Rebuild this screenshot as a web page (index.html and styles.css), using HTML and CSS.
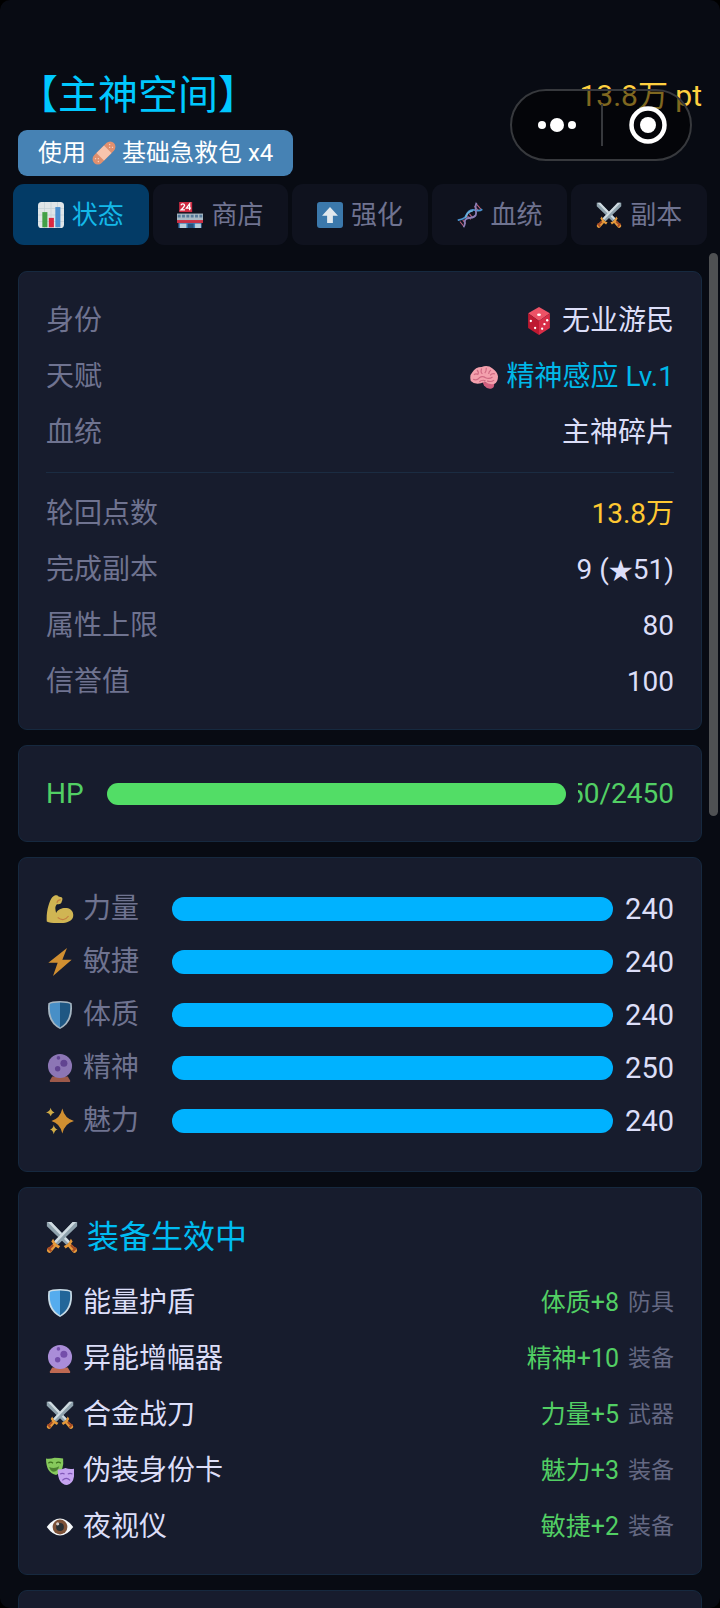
FILE: index.html
```html
<!DOCTYPE html>
<html lang="zh-CN">
<head>
<meta charset="utf-8">
<meta name="viewport" content="width=device-width, initial-scale=1">
<title>主神空间</title>
<link rel="stylesheet" href="styles.css">
</head>
<body>
<svg class="sprite" aria-hidden="true">
  <symbol id="bandage" viewBox="0 0 36 36">
    <g transform="rotate(-45 18 18)">
      <rect x="-3" y="10" width="42" height="16" rx="8" fill="#e0906f"/>
      <rect x="10" y="10" width="16" height="16" fill="#f7c4ad"/>
      <g fill="#f9d6c6"><circle cx="3" cy="15" r="1"/><circle cx="6" cy="18" r="1"/><circle cx="3" cy="21" r="1"/><circle cx="33" cy="15" r="1"/><circle cx="30" cy="18" r="1"/><circle cx="33" cy="21" r="1"/></g>
    </g>
  </symbol>
  <symbol id="chart" viewBox="0 0 36 36">
    <rect width="36" height="36" rx="5" fill="#dfe5e8"/>
    <path d="M0 9h36M0 18h36M0 27h36M9 0v36M18 0v36M27 0v36" stroke="#c3cfd5" stroke-width="1"/>
    <rect x="6" y="14" width="7" height="21" fill="#43a047"/>
    <rect x="15" y="22" width="7" height="13" fill="#dc2740"/>
    <rect x="24" y="7" width="7" height="28" fill="#4a90d0"/>
  </symbol>
  <symbol id="store" viewBox="0 0 36 36">
    <rect x="2" y="24" width="32" height="12" fill="#3f7fb5"/>
    <rect x="0" y="16" width="36" height="12" fill="#a9bac5"/>
    <path d="M1 19.500h34" stroke="#56799a" stroke-width="4" stroke-dasharray="4 2"/>
    <rect y="25" width="36" height="4" fill="#cb3044"/>
    <rect x="4" y="30" width="9" height="6" fill="#b9cedb"/><rect x="25" y="30" width="8" height="6" fill="#b9cedb"/>
    <rect x="15" y="30" width="8" height="6" fill="#27527c"/>
    <rect x="3" y="0" width="18" height="14" fill="#cf2b42"/>
    <path d="M5.500 4.500q.5-2 2.500-2t2.500 2q0 1.500-5 6.500h5.500M17.500 11.500v-9l-4.500 6h6.500" fill="none" stroke="#fff" stroke-width="1.800"/>
  </symbol>
  <symbol id="arrowup" viewBox="0 0 36 36">
    <rect width="36" height="36" rx="4" fill="#3b78ab"/>
    <path d="M18 7 29 19h-7v10h-8V19H7z" fill="#e1e8ed"/>
  </symbol>
  <symbol id="dna" viewBox="0 0 36 36">
    <path d="M4 27l5 6M8 25l4 5M14 19l5 5M17 16l4 5M24 6l6 6M27 3l6 7" stroke="#b8607f" stroke-width="1.500"/>
    <path d="M1 25c6-1 9-1 11-5 2-5 4-9 10-9 5 0 8 3 13-1" fill="none" stroke="#4a93cf" stroke-width="2.500"/>
    <path d="M9 35c4-5 0-8 3-11 4-4 11 0 14-6 2-6-3-9 1-17" fill="none" stroke="#8c7fb8" stroke-width="2.500"/>
    <path d="M12 22q2-9 10-10" fill="none" stroke="#6fb4dc" stroke-width="2"/>
  </symbol>
  <symbol id="swords" viewBox="0 0 36 36">
    <g id="blade">
      <path d="M1 1h5l21 22-4 4L1 6z" fill="#8fa2ad"/>
      <path d="M2 1h4l21 22-2 2z" fill="#d0dbe1"/>
      <path d="M20 28q5-1 8-8l2 3-2 3 6 5q2 2 0 4t-4 0l-5-6-3 2z" fill="#e59a3b"/>
      <path d="M28 27l5 5M30 34l4-4" stroke="#a74c25" stroke-width="2.500"/>
    </g>
    <use href="#blade" transform="matrix(-1 0 0 1 36 0)"/>
  </symbol>
  <symbol id="die" viewBox="0 0 36 36">
    <path d="M18 0 32 8 18 18 4 8z" fill="#ed5266"/>
    <path d="M4 8l14 10v18L4 27z" fill="#be1931"/>
    <path d="M32 8 18 18v18l14-9z" fill="#d82d47"/>
    <g fill="#fff"><ellipse cx="18" cy="10" rx="2.500" ry="1.700"/><circle cx="7.500" cy="18" r="1.500"/><circle cx="13" cy="27" r="1.500"/><circle cx="28.500" cy="17" r="1.500"/><circle cx="25" cy="22" r="1.500"/><circle cx="22" cy="28" r="1.500"/></g>
  </symbol>
  <symbol id="brain" viewBox="0 0 36 36">
    <path d="M18 29q4 5 9 4 5-1 4-7l-15-2z" fill="#d2607f"/>
    <path d="M1 23Q-1 16 3 12 7 5 15 5 23 2 29 7q6 4 7 10 0 8-5 10-7 1-12-3Q8 30 1 23z" fill="#f4a0ad"/>
    <path d="M5 15q3-2 5 0M9 9q3 3 1 6M15 7q-2 5 1 7M21 6q0 5-2 7M27 9q-3 2-3 5M32 14q-4-1-6 2M4 21q5 2 8-2 4-3 8 0 5 2 9-1M12 24q4-3 8-1M22 23q5 2 9-1" fill="none" stroke="#d06a83" stroke-width="1.500"/>
  </symbol>
  <symbol id="arm" viewBox="0 0 36 36">
    <path d="M1 34C0 22 4 8 8 3c3-4 8-3 8-1l4 1c2 1 1 4 0 6 0 3-5 3-6 3-3 3-2 7-1 11 4-8 21-9 22 2 1 10-12 12-21 11Q5 36 1 34z" fill="#ffdc5d"/>
    <path d="M15 29q8 6 14-2M14 10q1-4 5-4" fill="none" stroke="#ef9645" stroke-width="1.500"/>
  </symbol>
  <symbol id="bolt" viewBox="0 0 36 36">
    <path d="M27 0 3 19h12L9 36 33 15H21z" fill="#ffac33"/>
  </symbol>
  <symbol id="shield" viewBox="0 0 36 36">
    <path d="M18 0q11 0 15 3 3 24-15 33Q0 27 3 3 7 0 18 0z" fill="#c9dce7"/>
    <path d="M18 2Q9 2 5 4 3 25 18 34z" fill="#55acee"/>
    <path d="M18 2q9 0 13 2 2 21-13 30z" fill="#226699"/>
  </symbol>
  <symbol id="orb" viewBox="0 0 36 36">
    <path d="M8 29h20l3 5v2H5v-2z" fill="#bf6952"/>
    <circle cx="18" cy="15.500" r="15.500" fill="#aa8dd8"/>
    <g fill="#744eaa"><circle cx="23" cy="12" r="4.500"/><circle cx="15" cy="19" r="3.500"/><circle cx="16" cy="5" r="2.300"/></g>
  </symbol>
  <symbol id="sparkles" viewBox="0 0 36 36">
    <path d="M21 2q3 13 15 16-12 3-15 16Q18 21 7 18 18 15 21 2z" fill="#ffac33"/>
    <path d="M6 1q1 5 5 6-4 1-5 5-1-4-6-5 5-1 6-6zM10 23q1 5 5 6-4 1-5 6-1-5-5-6 4-1 5-6z" fill="#ffcf4d"/>
  </symbol>
  <symbol id="masks" viewBox="0 0 36 36">
    <path d="M0 2q5 1 11-1 6 0 11 1 2 17-9 21Q0 21 0 2z" fill="#86c95c"/>
    <path d="M3 8q3-3 6 0M13 8q3-3 6 0" fill="none" stroke="#3e721d" stroke-width="1.500"/>
    <path d="M4 13q7 3 13-1-2 7-7 7-4 0-6-6z" fill="#4b8130"/>
    <path d="M15 16q6 0 10-2 5 2 11 1 2 19-9 21Q15 35 15 16z" fill="#c5a3f0"/>
    <path d="M18 22q3-2 6 0M28 22q3-2 6 0M21 30q5-5 10 0" fill="none" stroke="#8058b8" stroke-width="1.500"/>
  </symbol>
  <symbol id="eye" viewBox="0 0 36 36">
    <path d="M1 18Q9 7 18 7t17 11q-8 11-17 11T1 18z" fill="#f5f8fa"/>
    <circle cx="18" cy="18" r="9.500" fill="#7d5238"/>
    <circle cx="18" cy="18" r="5" fill="#292f33"/>
    <circle cx="15" cy="14" r="2" fill="#d5cdc8"/>
  </symbol>
</svg>

<div class="app">
  <header class="header">
    <h1 class="title">【主神空间】</h1>
    <p class="points">13.8万 pt</p>
  </header>

  <div class="capsule">
    <button class="capsule-btn" type="button" aria-label="更多">
      <svg class="dots" viewBox="0 0 40 16"><circle cx="5" cy="8" r="4"/><circle cx="20" cy="8" r="7"/><circle cx="35" cy="8" r="4"/></svg>
    </button>
    <button class="capsule-btn capsule-close" type="button" aria-label="关闭">
      <svg class="ring" viewBox="0 0 38 38"><circle cx="19" cy="19" r="16.500" fill="none" stroke="#fff" stroke-width="4.500"/><circle cx="19" cy="19" r="8"/></svg>
    </button>
  </div>

  <div class="quick">
    <button class="quick-btn" type="button">使用<svg class="icon"><use href="#bandage"/></svg>基础急救包 x4</button>
  </div>

  <nav class="tabs">
    <button class="tab tab-active" type="button"><svg class="icon"><use href="#chart"/></svg>状态</button>
    <button class="tab" type="button"><svg class="icon"><use href="#store"/></svg>商店</button>
    <button class="tab" type="button"><svg class="icon"><use href="#arrowup"/></svg>强化</button>
    <button class="tab" type="button"><svg class="icon"><use href="#dna"/></svg>血统</button>
    <button class="tab" type="button"><svg class="icon"><use href="#swords"/></svg>副本</button>
  </nav>

  <main class="content">
    <section class="card">
      <dl class="rows">
        <div class="row"><dt>身份</dt><dd><svg class="icon"><use href="#die"/></svg>无业游民</dd></div>
        <div class="row"><dt>天赋</dt><dd class="cyan"><svg class="icon"><use href="#brain"/></svg>精神感应 Lv.1</dd></div>
        <div class="row"><dt>血统</dt><dd>主神碎片</dd></div>
      </dl>
      <hr class="divider">
      <dl class="rows">
        <div class="row"><dt>轮回点数</dt><dd class="gold">13.8万</dd></div>
        <div class="row"><dt>完成副本</dt><dd><span>9 (<span class="star">★</span>51)</span></dd></div>
        <div class="row"><dt>属性上限</dt><dd>80</dd></div>
        <div class="row"><dt>信誉值</dt><dd>100</dd></div>
      </dl>
    </section>

    <section class="card">
      <div class="hp">
        <span class="hp-label">HP</span>
        <div class="hp-bar" role="progressbar" aria-label="HP" aria-valuenow="2450" aria-valuemax="2450"></div>
        <span class="hp-value">2450/2450</span>
      </div>
    </section>

    <section class="card card-stats">
      <div class="stat"><span class="stat-label"><svg class="icon"><use href="#arm"/></svg>力量</span><div class="stat-bar"></div><span class="stat-value">240</span></div>
      <div class="stat"><span class="stat-label"><svg class="icon"><use href="#bolt"/></svg>敏捷</span><div class="stat-bar"></div><span class="stat-value">240</span></div>
      <div class="stat"><span class="stat-label"><svg class="icon"><use href="#shield"/></svg>体质</span><div class="stat-bar"></div><span class="stat-value">240</span></div>
      <div class="stat"><span class="stat-label"><svg class="icon"><use href="#orb"/></svg>精神</span><div class="stat-bar"></div><span class="stat-value">250</span></div>
      <div class="stat"><span class="stat-label"><svg class="icon"><use href="#sparkles"/></svg>魅力</span><div class="stat-bar"></div><span class="stat-value">240</span></div>
    </section>

    <section class="card">
      <h2 class="card-title"><svg class="icon"><use href="#swords"/></svg>装备生效中</h2>
      <ul class="rows">
        <li class="row"><span class="item"><svg class="icon"><use href="#shield"/></svg>能量护盾</span><span class="effect">体质+8<span class="kind">防具</span></span></li>
        <li class="row"><span class="item"><svg class="icon"><use href="#orb"/></svg>异能增幅器</span><span class="effect">精神+10<span class="kind">装备</span></span></li>
        <li class="row"><span class="item"><svg class="icon"><use href="#swords"/></svg>合金战刀</span><span class="effect">力量+5<span class="kind">武器</span></span></li>
        <li class="row"><span class="item"><svg class="icon"><use href="#masks"/></svg>伪装身份卡</span><span class="effect">魅力+3<span class="kind">装备</span></span></li>
        <li class="row"><span class="item"><svg class="icon"><use href="#eye"/></svg>夜视仪</span><span class="effect">敏捷+2<span class="kind">装备</span></span></li>
      </ul>
    </section>

    <section class="card card-next"></section>
  </main>
  <div class="scroll-thumb"></div>
</div>
</body>
</html>
```

FILE: styles.css
```css
* {
  box-sizing: border-box;
}

body {
  margin: 0;
  background: #000;
  color: #dcdef8;
  font-family: Roboto, "Noto Sans CJK SC", sans-serif;
  font-size: 28px;
  line-height: 40px;
}

h1, h2, p, dl, dd, ul {
  margin: 0;
  padding: 0;
  font-weight: 400;
}

button {
  border: 0;
  padding: 0;
  font: inherit;
  color: inherit;
}

.sprite {
  position: absolute;
  width: 0;
  height: 0;
}

.icon {
  flex: none;
  width: 1em;
  height: 1em;
}

.app {
  position: relative;
  display: flex;
  flex-direction: column;
  height: 100vh;
  overflow: hidden;
  border-radius: 10px;
  background: #080b13;
}

.header {
  display: flex;
  justify-content: space-between;
  align-items: center;
  padding: 68px 18px 6px;
}

.title {
  color: #00c8ff;
  font-size: 40px;
  line-height: 56px;
}

.points {
  color: #ffd040;
  font-size: 30px;
}

.capsule {
  position: absolute;
  top: 89px;
  right: 28px;
  display: flex;
  width: 182px;
  height: 72px;
  border: 2px solid #37393d;
  border-radius: 36px;
  background: rgba(0, 0, 0, 0.5);
}

.capsule-btn {
  flex: 1;
  display: flex;
  align-items: center;
  justify-content: center;
  background: none;
}

.capsule-close {
  justify-content: flex-start;
}

.capsule-close::before {
  content: "";
  width: 2px;
  height: 42px;
  margin-right: 26px;
  background: #37393d;
}

.dots {
  width: 40px;
  fill: #fff;
}

.ring {
  width: 38px;
  fill: #fff;
}

.quick {
  display: flex;
  padding: 0 18px 8px;
}

.quick-btn {
  display: flex;
  align-items: center;
  gap: 6px;
  height: 46px;
  padding: 0 20px;
  border-radius: 9px;
  background: #4682b4;
  color: #fff;
  font-size: 24px;
}

.tabs {
  display: flex;
  gap: 4px;
  padding: 0 13px 8px;
}

.tab {
  flex: 1;
  display: flex;
  align-items: center;
  justify-content: center;
  gap: 8px;
  height: 61px;
  border-radius: 11px;
  background: #0f121e;
  color: #6f7390;
  font-size: 26px;
}

.tab-active {
  background: #033b66;
  color: #14b8e8;
}

.content {
  flex: 1;
  display: flex;
  flex-direction: column;
  gap: 15px;
  min-height: 0;
  padding: 18px 18px 0;
  overflow: hidden;
}

.card {
  flex: none;
  padding: 20px 27px;
  border: 1px solid #16293f;
  border-radius: 9px;
  background: #171c2d;
}

.card-stats {
  padding-block: 24px;
}

.card-next {
  min-height: 98px;
}

.rows {
  list-style: none;
}

.row {
  display: flex;
  justify-content: space-between;
  align-items: center;
  height: 56px;
  padding-top: 2px;
}

.row dt {
  color: #6f7390;
}

.row dd,
.item,
.effect,
.stat-label,
.card-title {
  display: flex;
  align-items: center;
  gap: 9px;
}

.row .cyan {
  color: #00b8e8;
}

.row .gold {
  color: #ffc832;
}

.star {
  font-size: 24px;
}

.divider {
  height: 1px;
  margin: 12px 0;
  border: 0;
  background: #1b2c42;
}

.hp {
  display: flex;
  align-items: center;
  height: 55px;
  color: #52cf64;
}

.hp-label {
  width: 61px;
}

.hp-bar {
  flex: 1;
  height: 22px;
  border-radius: 11px;
  background: #52dd66;
}

.hp-value {
  display: flex;
  justify-content: flex-end;
  width: 96px;
  margin-left: 12px;
  overflow: hidden;
}

.stat {
  display: flex;
  align-items: center;
  height: 53px;
}

.stat-label {
  width: 126px;
  color: #6f7390;
}

.stat-label .icon {
  opacity: 0.8;
}

.stat-bar {
  flex: 1;
  height: 24px;
  border-radius: 12px;
  background: #00b2ff;
}

.stat-value {
  width: 61px;
  font-size: 29px;
  text-align: right;
}

.card-title {
  height: 56px;
  margin-bottom: 10px;
  padding-top: 2px;
  color: #00bcf2;
  font-size: 32px;
}

.effect {
  color: #52cf64;
  font-size: 25px;
}

.kind {
  color: #646882;
  font-size: 23px;
}

.scroll-thumb {
  position: absolute;
  top: 253px;
  right: 2px;
  width: 9px;
  height: 35%;
  border-radius: 5px;
  background: #4f5153;
}
```
